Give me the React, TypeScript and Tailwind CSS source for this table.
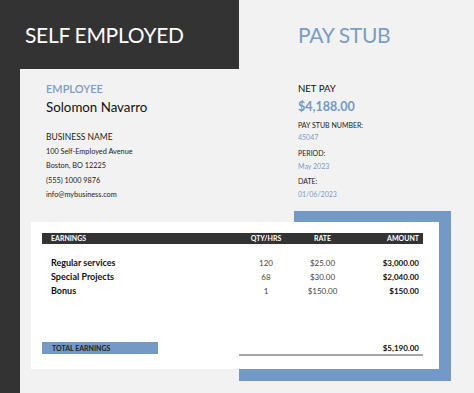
import React from "react";

const rows = [
  { name: "Regular services", qty: "120", rate: "$25.00", amount: "$3,000.00" },
  { name: "Special Projects", qty: "68", rate: "$30.00", amount: "$2,040.00" },
  { name: "Bonus", qty: "1", rate: "$150.00", amount: "$150.00" },
];

const App = () => {
  return (
    <div className="w-[474px] h-[393px] bg-[#f2f2f2] flex overflow-hidden font-['Lato','Liberation_Sans',sans-serif]">
      {/* dark strip on the left */}
      <div className="w-[20px] h-full bg-[#333333]"></div>

      <div className="flex-1 flex flex-col">
        {/* header */}
        <div className="flex h-[69px]">
          <div className="w-[219px] bg-[#333333] flex items-center pl-[5px]">
            <h1 className="text-[21px] leading-[22px] text-white tracking-[-0.3px]">SELF EMPLOYED</h1>
          </div>
          <div className="flex-1 flex items-center pl-[59px]">
            <h2 className="text-[21px] leading-[22px] text-[#7b9cc6] tracking-[-0.3px]">PAY STUB</h2>
          </div>
        </div>

        {/* info */}
        <div className="flex h-[153px]">
          <div className="w-[278px] pl-[26px] pt-[13px] text-[#222]">
            <div className="text-[11px] leading-[14px] font-semibold text-[#7b9cc6]">EMPLOYEE</div>
            <div className="text-[13.3px] leading-[18px] mt-[2px] text-[#111]">Solomon Navarro</div>
            <div className="text-[8.5px] leading-[12px] mt-[15px]">BUSINESS NAME</div>
            <div className="text-[7.3px] leading-[14.3px] mt-[2px]">100 Self-Employed Avenue</div>
            <div className="text-[7.3px] leading-[14.3px]">Boston, BO 12225</div>
            <div className="text-[7.3px] leading-[14.3px]">(555) 1000 9876</div>
            <div className="text-[7.3px] leading-[14.3px]">info@mybusiness.com</div>
          </div>
          <div className="flex-1 pt-[13px] text-[#222]">
            <div className="text-[9.6px] leading-[14px] text-[#111]">NET PAY</div>
            <div className="text-[12.5px] leading-[18px] mt-[2px] font-bold text-[#7399c6]">$4,188.00</div>
            <div className="text-[7px] leading-[12px] mt-[3px]">PAY STUB NUMBER:</div>
            <div className="text-[7px] leading-[12px] text-[#7b9cc6]">45047</div>
            <div className="text-[7px] leading-[12px] mt-[4px]">PERIOD:</div>
            <div className="text-[7px] leading-[12px] mt-[1px] text-[#7b9cc6]">May 2023</div>
            <div className="text-[7px] leading-[12px] mt-[3px]">DATE:</div>
            <div className="text-[7px] leading-[12px] mt-[1px] text-[#7b9cc6]">01/06/2023</div>
          </div>
        </div>

        {/* earnings card */}
        <div className="relative ml-[11px] w-[408px] h-[147px]">
          <div className="absolute left-[263px] top-[-11px] w-[157px] h-[170px] bg-[#7399c6]"></div>
          <div className="absolute left-[208px] top-[147px] w-[212px] h-[12px] bg-[#7399c6]"></div>

          <div className="relative h-full bg-white pt-[11px] pl-[11px] pr-[16px] pb-[13px] flex flex-col">
            <div className="bg-[#333333] h-[11px] pl-[9px] pr-[4px] grid grid-cols-[195px_40px_73px_60px] items-center text-[7px] leading-[11px] font-bold text-white">
              <span>EARNINGS</span>
              <span className="text-center">QTY/HRS</span>
              <span className="text-center">RATE</span>
              <span className="text-right">AMOUNT</span>
            </div>

            <div className="mt-[12px] pl-[9px] pr-[4px]">
              {rows.map((r) => (
                <div key={r.name} className="grid grid-cols-[195px_40px_73px_60px] items-center leading-[14.2px]">
                  <span className="text-[9px] font-bold text-[#111]">{r.name}</span>
                  <span className="text-[8px] text-center text-[#444]">{r.qty}</span>
                  <span className="text-[8px] text-center text-[#444]">{r.rate}</span>
                  <span className="text-[8px] text-right font-bold text-[#111]">{r.amount}</span>
                </div>
              ))}
            </div>

            <div className="mt-auto flex items-start">
              <div className="w-[116px] h-[12px] bg-[#7399c6] pl-[10px] text-[7px] leading-[12px] font-bold text-[#222]">
                TOTAL EARNINGS
              </div>
              <div className="ml-auto w-[184px] border-b-2 border-[#a6a6a6] pr-[4px] text-right text-[8px] leading-[12px] font-bold text-[#111]">
                $5,190.00
              </div>
            </div>
          </div>
        </div>
      </div>
    </div>
  );
};

export default App;
